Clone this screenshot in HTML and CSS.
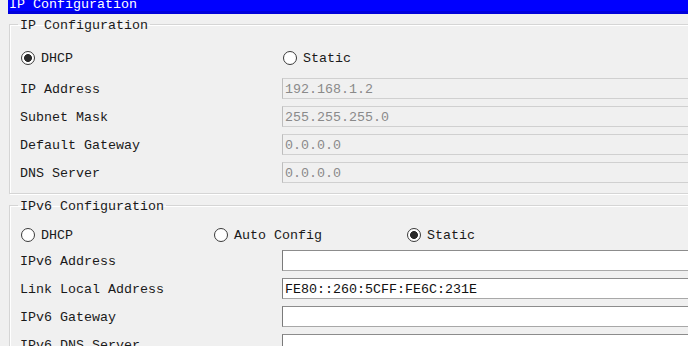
FILE: index.html
```html
<!DOCTYPE html>
<html>
    <head>
        <title>IP Configuration</title>
        <link rel="stylesheet" href="styles.css">
    </head>
    <body>
        <div class="window">
            <div class="titlebar">IP Configuration</div>

            <fieldset class="group group-v4">
                <legend>IP Configuration</legend>
                <div class="choices">
                    <label class="radio"><span class="dot checked"></span>DHCP</label>
                    <label class="radio"><span class="dot"></span>Static</label>
                </div>
                <div class="fields">
                    <span>IP Address</span>
                    <span class="field disabled">192.168.1.2</span>
                    <span>Subnet Mask</span>
                    <span class="field disabled">255.255.255.0</span>
                    <span>Default Gateway</span>
                    <span class="field disabled">0.0.0.0</span>
                    <span>DNS Server</span>
                    <span class="field disabled">0.0.0.0</span>
                </div>
            </fieldset>

            <fieldset class="group group-v6">
                <legend>IPv6 Configuration</legend>
                <div class="choices">
                    <label class="radio"><span class="dot"></span>DHCP</label>
                    <label class="radio"><span class="dot"></span>Auto Config</label>
                    <label class="radio"><span class="dot checked"></span>Static</label>
                </div>
                <div class="fields">
                    <span>IPv6 Address</span>
                    <span class="field"></span>
                    <span>Link Local Address</span>
                    <span class="field">FE80::260:5CFF:FE6C:231E</span>
                    <span>IPv6 Gateway</span>
                    <span class="field"></span>
                    <span>IPv6 DNS Server</span>
                    <span class="field"></span>
                </div>
            </fieldset>
        </div>
    </body>
</html>
```

FILE: styles.css
```css
body {
    margin: 0;
    background-color: #F0F0F0;
    color: #1A1A1A;
    font-family: "Liberation Mono", "DejaVu Sans Mono", monospace;
    font-size: 13.33px;
    overflow: hidden;
}

.window {
    width: 760px;
    padding-left: 8px;
}

.titlebar {
    height: 14px;
    padding-left: 1px;
    background: linear-gradient(#0000FF 0 11px, #0000DC 11px);
    color: #FFF;
    line-height: 9px;
    overflow: hidden;
}

fieldset.group {
    margin: 2px 0 0 1px;
    padding: 0 0 10px 10px;
    border: 1px solid #D5D5D5;
    box-shadow: inset 1px 1px 0 #FFF, 1px 1px 0 #FFF;
}
fieldset.group > legend {
    margin-left: -2px;
    padding: 4px 2px 0;
    line-height: 12px;
}
fieldset.group-v6 {
    margin-top: 3px;
}

.choices {
    display: grid;
    grid-template-columns: 262px 1fr;
    height: 21px;
    margin: 15px 0 10px;
}
.group-v6 .choices {
    grid-template-columns: 193px 193px 1fr;
    margin: 11px 0 5px;
}

.radio {
    display: flex;
    align-items: center;
    padding-top: 2px;
}
.radio > .dot {
    box-sizing: border-box;
    width: 14px;
    height: 14px;
    margin: -2px 6px 0 1px;
    border: 1px solid #3A3A3A;
    border-radius: 50%;
    background: #FFF;
}
.radio > .dot.checked {
    background: radial-gradient(circle, #2B2B2B 0 3.6px, #FFF 4.3px);
}

.fields {
    display: grid;
    grid-template-columns: 262px 1fr;
    grid-auto-rows: 21px;
    row-gap: 7px;
    align-items: center;
}
.fields > span {
    padding-top: 2px;
}

.field {
    box-sizing: border-box;
    height: 21px;
    padding: 0 2px;
    border: 1px solid #A8A8A8;
    border-left-color: #7A7A7A;
    border-top-color: #8C8C8C;
    background: #FFF;
    color: #111;
    line-height: 19px;
}
.fields > .field {
    padding-top: 1px;
}
.field.disabled {
    border-color: #D0D0D0;
    border-left-color: #BDBDBD;
    background: #F0F0F0;
    color: #8A8A8A;
}
```
